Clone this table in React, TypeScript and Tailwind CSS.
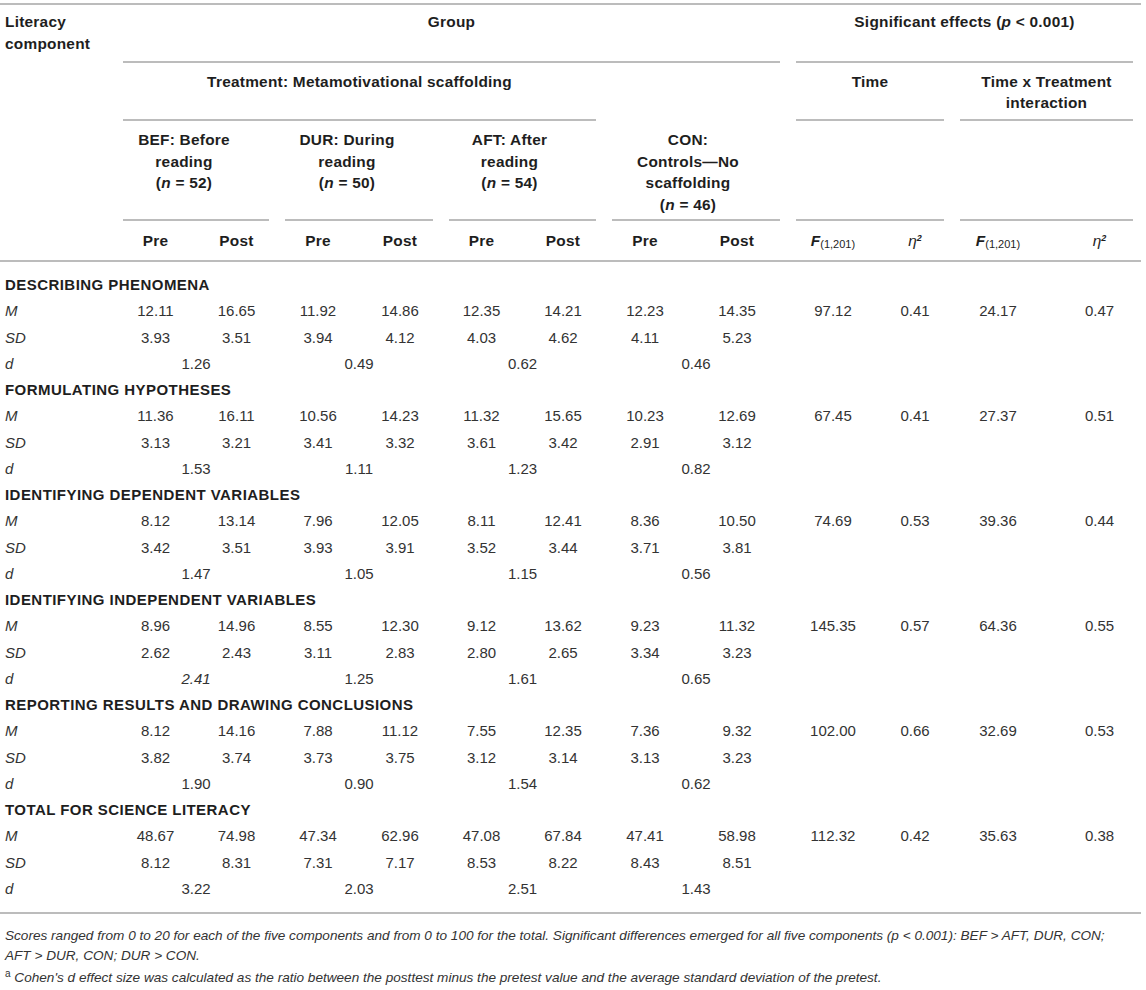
import React from "react";

const GRID =
  "grid grid-cols-[115px_81px_81px_82px_82px_81px_82px_82px_102px_90px_74px_92px_97px]";

type Section = {
  title: string;
  M: string[];
  SD: string[];
  d: string[];
  eff: string[];
  italicD?: number;
};

const sections: Section[] = [
  {
    title: "DESCRIBING PHENOMENA",
    M: ["12.11", "16.65", "11.92", "14.86", "12.35", "14.21", "12.23", "14.35"],
    SD: ["3.93", "3.51", "3.94", "4.12", "4.03", "4.62", "4.11", "5.23"],
    d: ["1.26", "0.49", "0.62", "0.46"],
    eff: ["97.12", "0.41", "24.17", "0.47"],
  },
  {
    title: "FORMULATING HYPOTHESES",
    M: ["11.36", "16.11", "10.56", "14.23", "11.32", "15.65", "10.23", "12.69"],
    SD: ["3.13", "3.21", "3.41", "3.32", "3.61", "3.42", "2.91", "3.12"],
    d: ["1.53", "1.11", "1.23", "0.82"],
    eff: ["67.45", "0.41", "27.37", "0.51"],
  },
  {
    title: "IDENTIFYING DEPENDENT VARIABLES",
    M: ["8.12", "13.14", "7.96", "12.05", "8.11", "12.41", "8.36", "10.50"],
    SD: ["3.42", "3.51", "3.93", "3.91", "3.52", "3.44", "3.71", "3.81"],
    d: ["1.47", "1.05", "1.15", "0.56"],
    eff: ["74.69", "0.53", "39.36", "0.44"],
  },
  {
    title: "IDENTIFYING INDEPENDENT VARIABLES",
    M: ["8.96", "14.96", "8.55", "12.30", "9.12", "13.62", "9.23", "11.32"],
    SD: ["2.62", "2.43", "3.11", "2.83", "2.80", "2.65", "3.34", "3.23"],
    d: ["2.41", "1.25", "1.61", "0.65"],
    eff: ["145.35", "0.57", "64.36", "0.55"],
    italicD: 0,
  },
  {
    title: "REPORTING RESULTS AND DRAWING CONCLUSIONS",
    M: ["8.12", "14.16", "7.88", "11.12", "7.55", "12.35", "7.36", "9.32"],
    SD: ["3.82", "3.74", "3.73", "3.75", "3.12", "3.14", "3.13", "3.23"],
    d: ["1.90", "0.90", "1.54", "0.62"],
    eff: ["102.00", "0.66", "32.69", "0.53"],
  },
  {
    title: "TOTAL FOR SCIENCE LITERACY",
    M: ["48.67", "74.98", "47.34", "62.96", "47.08", "67.84", "47.41", "58.98"],
    SD: ["8.12", "8.31", "7.31", "7.17", "8.53", "8.22", "8.43", "8.51"],
    d: ["3.22", "2.03", "2.51", "1.43"],
    eff: ["112.32", "0.42", "35.63", "0.38"],
  },
];

const LINE = "border-b-2 border-[#bcbcbc]";
const ROW = "h-[26.25px] leading-[26.25px]";

function Eta() {
  return (
    <span className="italic font-normal tracking-normal">
      η<sup className="text-[9px] font-bold">2</sup>
    </span>
  );
}

function FStat() {
  return (
    <span className="tracking-normal">
      <span className="italic font-bold">F</span>
      <sub className="text-[11px] font-normal">(1,201)</sub>
    </span>
  );
}

function SectionRows({ s }: { s: Section }) {
  return (
    <>
      <div
        className={`col-span-13 ${ROW} pl-[5px] font-bold text-[#1e1e1e] tracking-[0.45px]`}
      >
        {s.title}
      </div>
      {/* M row */}
      <div className={`${ROW} pl-[5px] italic`}>M</div>
      {s.M.map((v, i) => (
        <div key={"m" + i} className={`${ROW} text-center`}>
          {v}
        </div>
      ))}
      <div className={`${ROW} text-center`}>{s.eff[0]}</div>
      <div className={`${ROW} text-center`}>{s.eff[1]}</div>
      <div className={`${ROW} text-center`}>{s.eff[2]}</div>
      <div className={`${ROW} text-center pl-[14px]`}>{s.eff[3]}</div>
      {/* SD row */}
      <div className={`${ROW} pl-[5px] italic`}>SD</div>
      {s.SD.map((v, i) => (
        <div key={"sd" + i} className={`${ROW} text-center`}>
          {v}
        </div>
      ))}
      <div className={`col-span-4 ${ROW}`} />
      {/* d row */}
      <div className={`${ROW} pl-[5px] italic`}>d</div>
      {s.d.map((v, i) => (
        <div
          key={"d" + i}
          className={`col-span-2 ${ROW} text-center ${s.italicD === i ? "italic" : ""}`}
        >
          {v}
        </div>
      ))}
      <div className={`col-span-4 ${ROW}`} />
    </>
  );
}

export default function App() {
  return (
    <div className="min-h-[990px] bg-white pt-[3px] font-['Liberation_Sans',Arial,sans-serif] text-[#333333]">
      <div className="w-[1141px]">
        {/* Header */}
        <div
          className={`${GRID} grid-rows-[58px_58px_100px_39px] border-t-2 border-b-2 border-[#bcbcbc] text-[15.4px] tracking-[0.25px] font-bold text-[#1e1e1e] leading-[22px]`}
        >
          {/* Row 1 */}
          <div className="col-start-1 row-start-1 pl-[5px] pt-[6px]">
            Literacy component
          </div>
          <div className={`col-start-2 col-span-8 row-start-1 mx-[8px] ${LINE} pt-[6px] text-center`}>
            Group
          </div>
          <div className={`col-start-10 col-span-4 row-start-1 mx-[8px] ${LINE} pt-[6px] text-center`}>
            Significant effects (<span className="italic">p</span> &lt; 0.001)
          </div>

          {/* Row 2 */}
          <div className={`col-start-2 col-span-6 row-start-2 mx-[8px] ${LINE} pt-[8px] text-center`}>
            Treatment: Metamotivational scaffolding
          </div>
          <div className={`col-start-10 col-span-2 row-start-2 mx-[8px] ${LINE} pt-[8px] text-center`}>
            Time
          </div>
          <div className={`col-start-12 col-span-2 row-start-2 mx-[8px] ${LINE} pt-[8px] leading-[21px] text-center`}>
            Time x Treatment
            <br />
            interaction
          </div>

          {/* Row 3 */}
          <div className={`col-start-2 col-span-2 row-start-3 mx-[8px] ${LINE} pt-[8px] leading-[21.7px] text-center pr-[24px]`}>
            BEF: Before
            <br />
            reading
            <br />(<span className="italic">n</span> = 52)
          </div>
          <div className={`col-start-4 col-span-2 row-start-3 mx-[8px] ${LINE} pt-[8px] leading-[21.7px] text-center pr-[24px]`}>
            DUR: During
            <br />
            reading
            <br />(<span className="italic">n</span> = 50)
          </div>
          <div className={`col-start-6 col-span-2 row-start-3 mx-[8px] ${LINE} pt-[8px] leading-[21.7px] text-center pr-[26px]`}>
            AFT: After
            <br />
            reading
            <br />(<span className="italic">n</span> = 54)
          </div>
          <div className={`col-start-8 col-span-2 row-start-3 mx-[8px] ${LINE} pt-[8px] leading-[21.7px] text-center pr-[16px]`}>
            CON:
            <br />
            Controls—No
            <br />
            scaffolding
            <br />(<span className="italic">n</span> = 46)
          </div>
          <div className={`col-start-10 col-span-2 row-start-3 mx-[8px] ${LINE}`} />
          <div className={`col-start-12 col-span-2 row-start-3 mx-[8px] ${LINE}`} />

          {/* Row 4 */}
          {["Pre", "Post", "Pre", "Post", "Pre", "Post", "Pre", "Post"].map((t, i) => (
            <div key={i} className="row-start-4 flex items-center justify-center" style={{ gridColumnStart: i + 2 }}>
              {t}
            </div>
          ))}
          <div className="col-start-10 row-start-4 flex items-center justify-center">
            <FStat />
          </div>
          <div className="col-start-11 row-start-4 flex items-center justify-center">
            <Eta />
          </div>
          <div className="col-start-12 row-start-4 flex items-center justify-center">
            <FStat />
          </div>
          <div className="col-start-13 row-start-4 flex items-center justify-center pl-[14px]">
            <Eta />
          </div>
        </div>

        {/* Body */}
        <div className={`${GRID} pt-[10px] pb-[10px] border-b-2 border-[#bcbcbc] text-[15px]`}>
          {sections.map((s) => (
            <SectionRows key={s.title} s={s} />
          ))}
        </div>

        {/* Footnotes */}
        <div className="pt-[12px] pl-[5px] text-[13.6px] italic leading-[20px] text-[#333333]">
          <p>
            Scores ranged from 0 to 20 for each of the five components and from 0 to 100 for the total. Significant
            differences emerged for all five components (p &lt; 0.001): BEF &gt; AFT, DUR, CON;
            <br />
            AFT &gt; DUR, CON; DUR &gt; CON.
          </p>
          <p className="mt-[2px]">
            <sup className="text-[10px] not-italic">a</sup> Cohen's d effect size was calculated as the ratio between
            the posttest minus the pretest value and the average standard deviation of the pretest.
          </p>
        </div>
      </div>
    </div>
  );
}
